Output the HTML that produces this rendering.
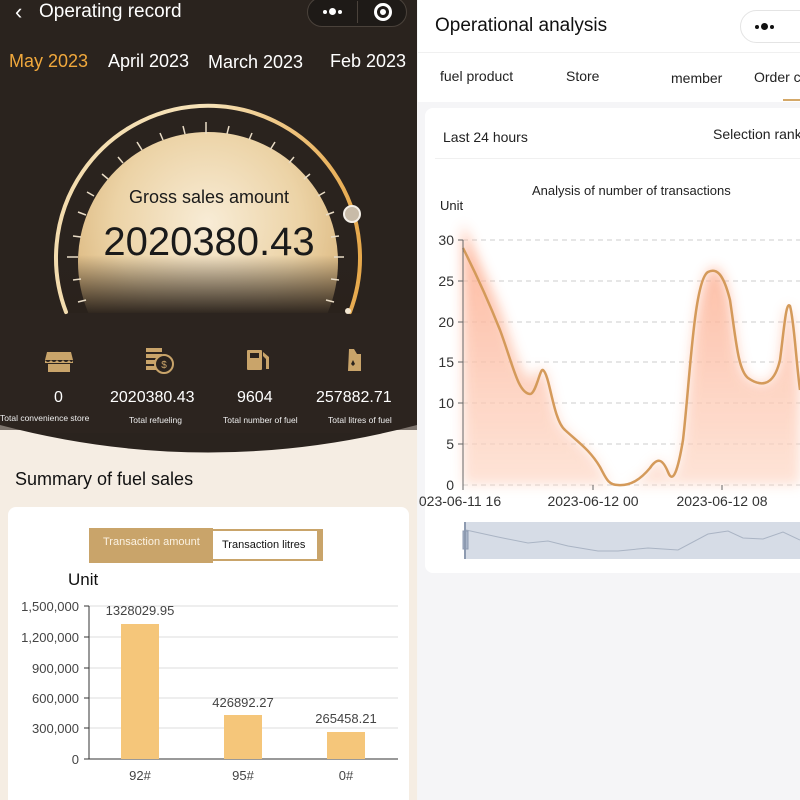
<!DOCTYPE html>
<html><head><meta charset="utf-8">
<style>
*{margin:0;padding:0;box-sizing:border-box}
body{width:800px;height:800px;overflow:hidden;font-family:"Liberation Sans",sans-serif;background:#f5f5f5;position:relative}
.abs{position:absolute}
#left{position:absolute;left:0;top:0;width:417px;height:800px;background:#f5ede3;overflow:hidden}
#right{position:absolute;left:418px;top:0;width:382px;height:800px;background:#f5f5f7;overflow:hidden}
.t{position:absolute;white-space:nowrap}
.d{position:absolute;border-radius:50%}
</style></head><body>
<div id="left">
<svg class="abs" style="left:0;top:0" width="417" height="460">
<defs>
<radialGradient id="dome" cx="0.5" cy="0.35" r="0.6">
<stop offset="0" stop-color="#f8ecd6"/><stop offset="0.6" stop-color="#ecd3a6"/><stop offset="1" stop-color="#d9b47a"/>
</radialGradient>
<linearGradient id="fade" x1="0" y1="0" x2="0" y2="1">
<stop offset="0" stop-color="#2a221c" stop-opacity="0"/><stop offset="1" stop-color="#2a221c" stop-opacity="1"/>
</linearGradient>
<linearGradient id="arcg" x1="0" y1="0" x2="1" y2="0">
<stop offset="0" stop-color="#f3dcae"/><stop offset="0.5" stop-color="#f6e2b8"/><stop offset="1" stop-color="#e7a94c"/>
</linearGradient>
</defs>
<path d="M0 0H417V425Q208 480 0 425Z" fill="#2a231e"/>
<rect x="0" y="310" width="417" height="120" fill="#2e2520" opacity="0.6"/>
<circle cx="208" cy="262" r="130" fill="url(#dome)"/>
<rect x="60" y="255" width="300" height="60" fill="url(#fade)"/>
<rect x="40" y="313" width="340" height="120" fill="#2c241f"/>
<path d="M66 312 A152 152 0 1 1 350 312" fill="none" stroke="url(#arcg)" stroke-width="4" stroke-linecap="round"/>
<g stroke="#e9dcc6" stroke-width="1.5">
<line x1="206" y1="122" x2="206" y2="134"/>
<line x1="183" y1="126" x2="185" y2="134"/><line x1="229" y1="126" x2="227" y2="134"/>
<line x1="160" y1="133" x2="163" y2="140"/><line x1="252" y1="133" x2="249" y2="140"/>
<line x1="137" y1="142" x2="142" y2="150"/><line x1="275" y1="142" x2="270" y2="150"/>
<line x1="118" y1="157" x2="123" y2="163"/><line x1="294" y1="157" x2="289" y2="163"/>
<line x1="102" y1="174" x2="108" y2="179"/><line x1="310" y1="174" x2="304" y2="179"/>
<line x1="87" y1="192" x2="94" y2="196"/><line x1="325" y1="192" x2="318" y2="196"/>
<line x1="78" y1="212" x2="86" y2="215"/><line x1="334" y1="212" x2="326" y2="215"/>
<line x1="73" y1="236" x2="81" y2="237"/><line x1="339" y1="236" x2="331" y2="237"/>
<line x1="67" y1="257" x2="78" y2="257"/><line x1="344" y1="257" x2="334" y2="257"/>
<line x1="73" y1="280" x2="81" y2="279"/><line x1="339" y1="280" x2="331" y2="279"/>
<line x1="78" y1="302" x2="86" y2="300"/><line x1="334" y1="302" x2="326" y2="300"/>
</g>
<circle cx="352" cy="214" r="8" fill="#c8bba8" stroke="#f5f0e8" stroke-width="2"/>
<circle cx="348" cy="311" r="3" fill="#f3e7d2"/>
<g fill="#c9a46a">
<path d="M47 352h24l2 8h-28z"/><path d="M45 360q3 4 6 0q3 4 6 0q3 4 6 0q3 4 6 0q3 4 4 0v3h-28z"/><rect x="48" y="364" width="22" height="8"/>
<rect x="146" y="348" width="16" height="4"/><rect x="146" y="354" width="16" height="4"/><rect x="146" y="360" width="16" height="4"/><rect x="146" y="366" width="16" height="4"/>
<circle cx="164" cy="364" r="9" fill="#2a231e" stroke="#c9a46a" stroke-width="2"/>
<rect x="247" y="350" width="15" height="20" rx="1"/><path d="M263 352l6 5v12h-3v-10l-3-3z"/>
<path d="M349 349h5l3 5h4v17h-13z"/>
</g>
<text x="164" y="368" font-size="10" fill="#c9a46a" text-anchor="middle" font-family="Liberation Sans">$</text>
<rect x="250" y="353" width="9" height="5" fill="#2a231e"/>
<path d="M353 360l2 4l-2 2l-2-2z" fill="#2a231e"/>
</svg>
<div class="t" style="left:15px;top:-1px;font-size:22px;color:#fff">&#8249;</div>
<div class="t" style="left:39px;top:1px;font-size:19px;color:#fff">Operating record</div>
<div class="abs" style="left:307px;top:-3px;width:100px;height:30px;border:1px solid #4a423b;border-radius:15px;background:#1e1a17"></div>
<div class="d" style="left:323px;top:10px;width:4px;height:4px;background:#fff"></div>
<div class="d" style="left:329px;top:8px;width:7px;height:7px;background:#fff"></div>
<div class="d" style="left:338px;top:10px;width:4px;height:4px;background:#fff"></div>
<div class="abs" style="left:357px;top:1px;width:1px;height:22px;background:#4a423b"></div>
<div class="abs" style="left:374px;top:3px;width:18px;height:18px;border:3px solid #fff;border-radius:50%"></div>
<div class="abs" style="left:380px;top:9px;width:6px;height:6px;background:#fff;border-radius:50%"></div>
<div class="t" style="left:9px;top:51px;font-size:18px;color:#f0a83c">May 2023</div>
<div class="t" style="left:108px;top:51px;font-size:18px;color:#fff">April 2023</div>
<div class="t" style="left:208px;top:52px;font-size:18px;color:#fff">March 2023</div>
<div class="t" style="left:330px;top:51px;font-size:18px;color:#fff">Feb 2023</div>
<div class="t" style="left:0;width:418px;text-align:center;top:187px;font-size:18px;color:#1a1a1a">Gross sales amount</div>
<div class="t" style="left:0;width:418px;text-align:center;top:220px;font-size:40px;color:#1a1a1a">2020380.43</div>
<div class="t" style="left:54px;top:389px;font-size:16px;color:#fff">0</div>
<div class="t" style="left:110px;top:389px;font-size:16px;color:#fff">2020380.43</div>
<div class="t" style="left:237px;top:389px;font-size:16px;color:#fff">9604</div>
<div class="t" style="left:316px;top:389px;font-size:16px;color:#fff">257882.71</div>
<div class="t" style="left:0;top:413px;font-size:8.5px;color:#eee">Total convenience store</div>
<div class="t" style="left:129px;top:415px;font-size:8.5px;color:#eee">Total refueling</div>
<div class="t" style="left:223px;top:415px;font-size:8.5px;color:#eee">Total number of fuel</div>
<div class="t" style="left:328px;top:415px;font-size:8.5px;color:#eee">Total litres of fuel</div>
<div class="t" style="left:15px;top:469px;font-size:18px;color:#111">Summary of fuel sales</div>
<div class="abs" style="left:8px;top:507px;width:401px;height:300px;background:#fff;border-radius:8px"></div>
<div class="abs" style="left:89px;top:528px;width:124px;height:35px;background:#c9a46a"></div>
<div class="abs" style="left:213px;top:529px;width:110px;height:32px;background:#fff;border:2px solid #c9a46a;border-left:none;border-right:6px solid #c9a46a"></div>
<div class="t" style="left:103px;top:536px;font-size:11px;color:#fbf2e2">Transaction amount</div>
<div class="t" style="left:222px;top:539px;font-size:11px;color:#111">Transaction litres</div>
<div class="t" style="left:68px;top:570px;font-size:17px;color:#111">Unit</div>
<svg class="abs" style="left:0;top:590px" width="417" height="210">
<g stroke="#ddd" stroke-width="1">
<line x1="89" y1="16" x2="398" y2="16"/><line x1="89" y1="47" x2="398" y2="47"/><line x1="89" y1="78" x2="398" y2="78"/><line x1="89" y1="108" x2="398" y2="108"/><line x1="89" y1="138" x2="398" y2="138"/>
</g>
<line x1="89" y1="16" x2="89" y2="169" stroke="#333"/>
<line x1="84" y1="169" x2="398" y2="169" stroke="#333"/>
<g stroke="#333"><line x1="84" y1="16" x2="89" y2="16"/><line x1="84" y1="47" x2="89" y2="47"/><line x1="84" y1="78" x2="89" y2="78"/><line x1="84" y1="108" x2="89" y2="108"/><line x1="84" y1="138" x2="89" y2="138"/></g>
<g fill="#f5c67a"><rect x="121" y="34" width="38" height="135"/><rect x="224" y="125" width="38" height="44"/><rect x="327" y="142" width="38" height="27"/></g>
<g font-size="13" fill="#444" font-family="Liberation Sans" text-anchor="end">
<text x="79" y="21">1,500,000</text><text x="79" y="52">1,200,000</text><text x="79" y="83">900,000</text><text x="79" y="113">600,000</text><text x="79" y="143">300,000</text><text x="79" y="174">0</text>
</g>
<g font-size="13" fill="#444" font-family="Liberation Sans" text-anchor="middle">
<text x="140" y="25">1328029.95</text><text x="243" y="117">426892.27</text><text x="346" y="133">265458.21</text>
<text x="140" y="190">92#</text><text x="243" y="190">95#</text><text x="346" y="190">0#</text>
</g>
</svg>
</div>
<div id="right">
<div class="abs" style="left:0;top:0;width:382px;height:52px;background:#fff"></div>
<div class="t" style="left:17px;top:15px;font-size:19px;color:#111">Operational analysis</div>
<div class="abs" style="left:322px;top:10px;width:80px;height:33px;border:1px solid #e4e4e4;border-radius:17px;background:#fff"></div>
<div class="d" style="left:337px;top:25px;width:4px;height:4px;background:#111"></div>
<div class="d" style="left:343px;top:23px;width:7px;height:7px;background:#111"></div>
<div class="d" style="left:352px;top:25px;width:4px;height:4px;background:#111"></div>
<div class="abs" style="left:0;top:52px;width:382px;height:50px;background:#fff;border-top:1px solid #f0f0f0"></div>
<div class="t" style="left:22px;top:68px;font-size:14px;color:#222">fuel product</div>
<div class="t" style="left:148px;top:68px;font-size:14px;color:#222">Store</div>
<div class="t" style="left:253px;top:70px;font-size:14px;color:#222">member</div>
<div class="t" style="left:336px;top:69px;font-size:14px;color:#222">Order c</div>
<div class="abs" style="left:365px;top:99px;width:17px;height:2px;background:#d4a868"></div>
<div class="abs" style="left:7px;top:108px;width:390px;height:465px;background:#fff;border-radius:8px"></div>
<div class="t" style="left:25px;top:129px;font-size:14px;color:#222">Last 24 hours</div>
<div class="t" style="left:295px;top:126px;font-size:14px;color:#222">Selection rank</div>
<div class="abs" style="left:17px;top:158px;width:370px;height:1px;background:#f0f0f0"></div>
<div class="t" style="left:114px;top:183px;font-size:13px;color:#222">Analysis of number of transactions</div>
<div class="t" style="left:22px;top:198px;font-size:13px;color:#222">Unit</div>
</div>
<svg class="abs" style="left:418px;top:0" width="382" height="800">
<defs>
<linearGradient id="ar" x1="0" y1="0" x2="0" y2="1"><stop offset="0" stop-color="#fda98a" stop-opacity="0.9"/><stop offset="1" stop-color="#fdd6c4" stop-opacity="0.7"/></linearGradient>
<filter id="bl"><feGaussianBlur stdDeviation="6"/></filter>
</defs>
<g stroke="#ccc" stroke-dasharray="5 4"><line x1="45" y1="240" x2="382" y2="240"/><line x1="45" y1="281" x2="382" y2="281"/><line x1="45" y1="322" x2="382" y2="322"/><line x1="45" y1="362" x2="382" y2="362"/><line x1="45" y1="403" x2="382" y2="403"/><line x1="45" y1="444" x2="382" y2="444"/><line x1="45" y1="485" x2="382" y2="485"/></g>
<path d="M45 224 C55 250,70 280,82 310 C95 345,100 370,112 378 C118 382,122 360,125 370 C132 380,135 420,147 430 C160 442,172 450,182 467 C188 478,190 485,200 485 C212 486,222 480,232 468 C240 456,245 460,250 472 C255 485,260 470,265 440 C272 380,276 300,290 272 C298 262,305 270,312 300 C318 340,320 370,330 378 C340 385,355 390,362 360 C366 330,368 295,372 310 C376 325,378 360,382 390 L382 485 L45 485Z" fill="url(#ar)" filter="url(#bl)" opacity="0.95"/>
<path d="M45 248 C55 268,70 300,82 330 C95 365,100 393,112 394 C118 394,122 368,125 370 C132 375,135 420,147 430 C160 442,172 450,182 467 C188 478,190 485,200 485 C212 486,222 480,232 468 C240 456,245 460,250 472 C255 485,260 470,265 440 C272 380,276 280,290 272 C298 268,305 272,312 300 C318 340,320 370,330 378 C340 385,355 390,362 360 C366 330,368 300,372 306 C376 320,378 360,382 390" fill="none" stroke="#d49a5a" stroke-width="2.5"/>
<line x1="45" y1="240" x2="45" y2="485" stroke="#666"/>
<g stroke="#666"><line x1="40" y1="240" x2="45" y2="240"/><line x1="40" y1="281" x2="45" y2="281"/><line x1="40" y1="322" x2="45" y2="322"/><line x1="40" y1="362" x2="45" y2="362"/><line x1="40" y1="403" x2="45" y2="403"/><line x1="40" y1="444" x2="45" y2="444"/><line x1="45" y1="485" x2="45" y2="490"/><line x1="175" y1="485" x2="175" y2="490"/><line x1="304" y1="485" x2="304" y2="490"/></g>
<g font-size="14" fill="#333" font-family="Liberation Sans" text-anchor="end">
<text x="36" y="245">30</text><text x="36" y="286">25</text><text x="36" y="327">20</text><text x="36" y="367">15</text><text x="36" y="408">10</text><text x="36" y="449">5</text><text x="36" y="490">0</text>
</g>
<g font-size="14" fill="#333" font-family="Liberation Sans" text-anchor="middle">
<text x="42" y="506">023-06-11 16</text><text x="175" y="506">2023-06-12 00</text><text x="304" y="506">2023-06-12 08</text>
</g>
<rect x="47" y="522" width="335" height="37" fill="#d6dce6"/>
<path d="M48 530 L80 537 L110 543 L130 541 L150 546 L180 551 L200 551 L230 548 L260 550 L290 534 L310 531 L325 538 L345 539 L365 532 L382 540" fill="none" stroke="#aab4c4"/>
<rect x="45" y="531" width="5" height="18" fill="#a8b4c8" stroke="#8d9ab0"/>
<line x1="47" y1="522" x2="47" y2="559" stroke="#8d9ab0" stroke-width="2"/>
</svg>
</body></html>
